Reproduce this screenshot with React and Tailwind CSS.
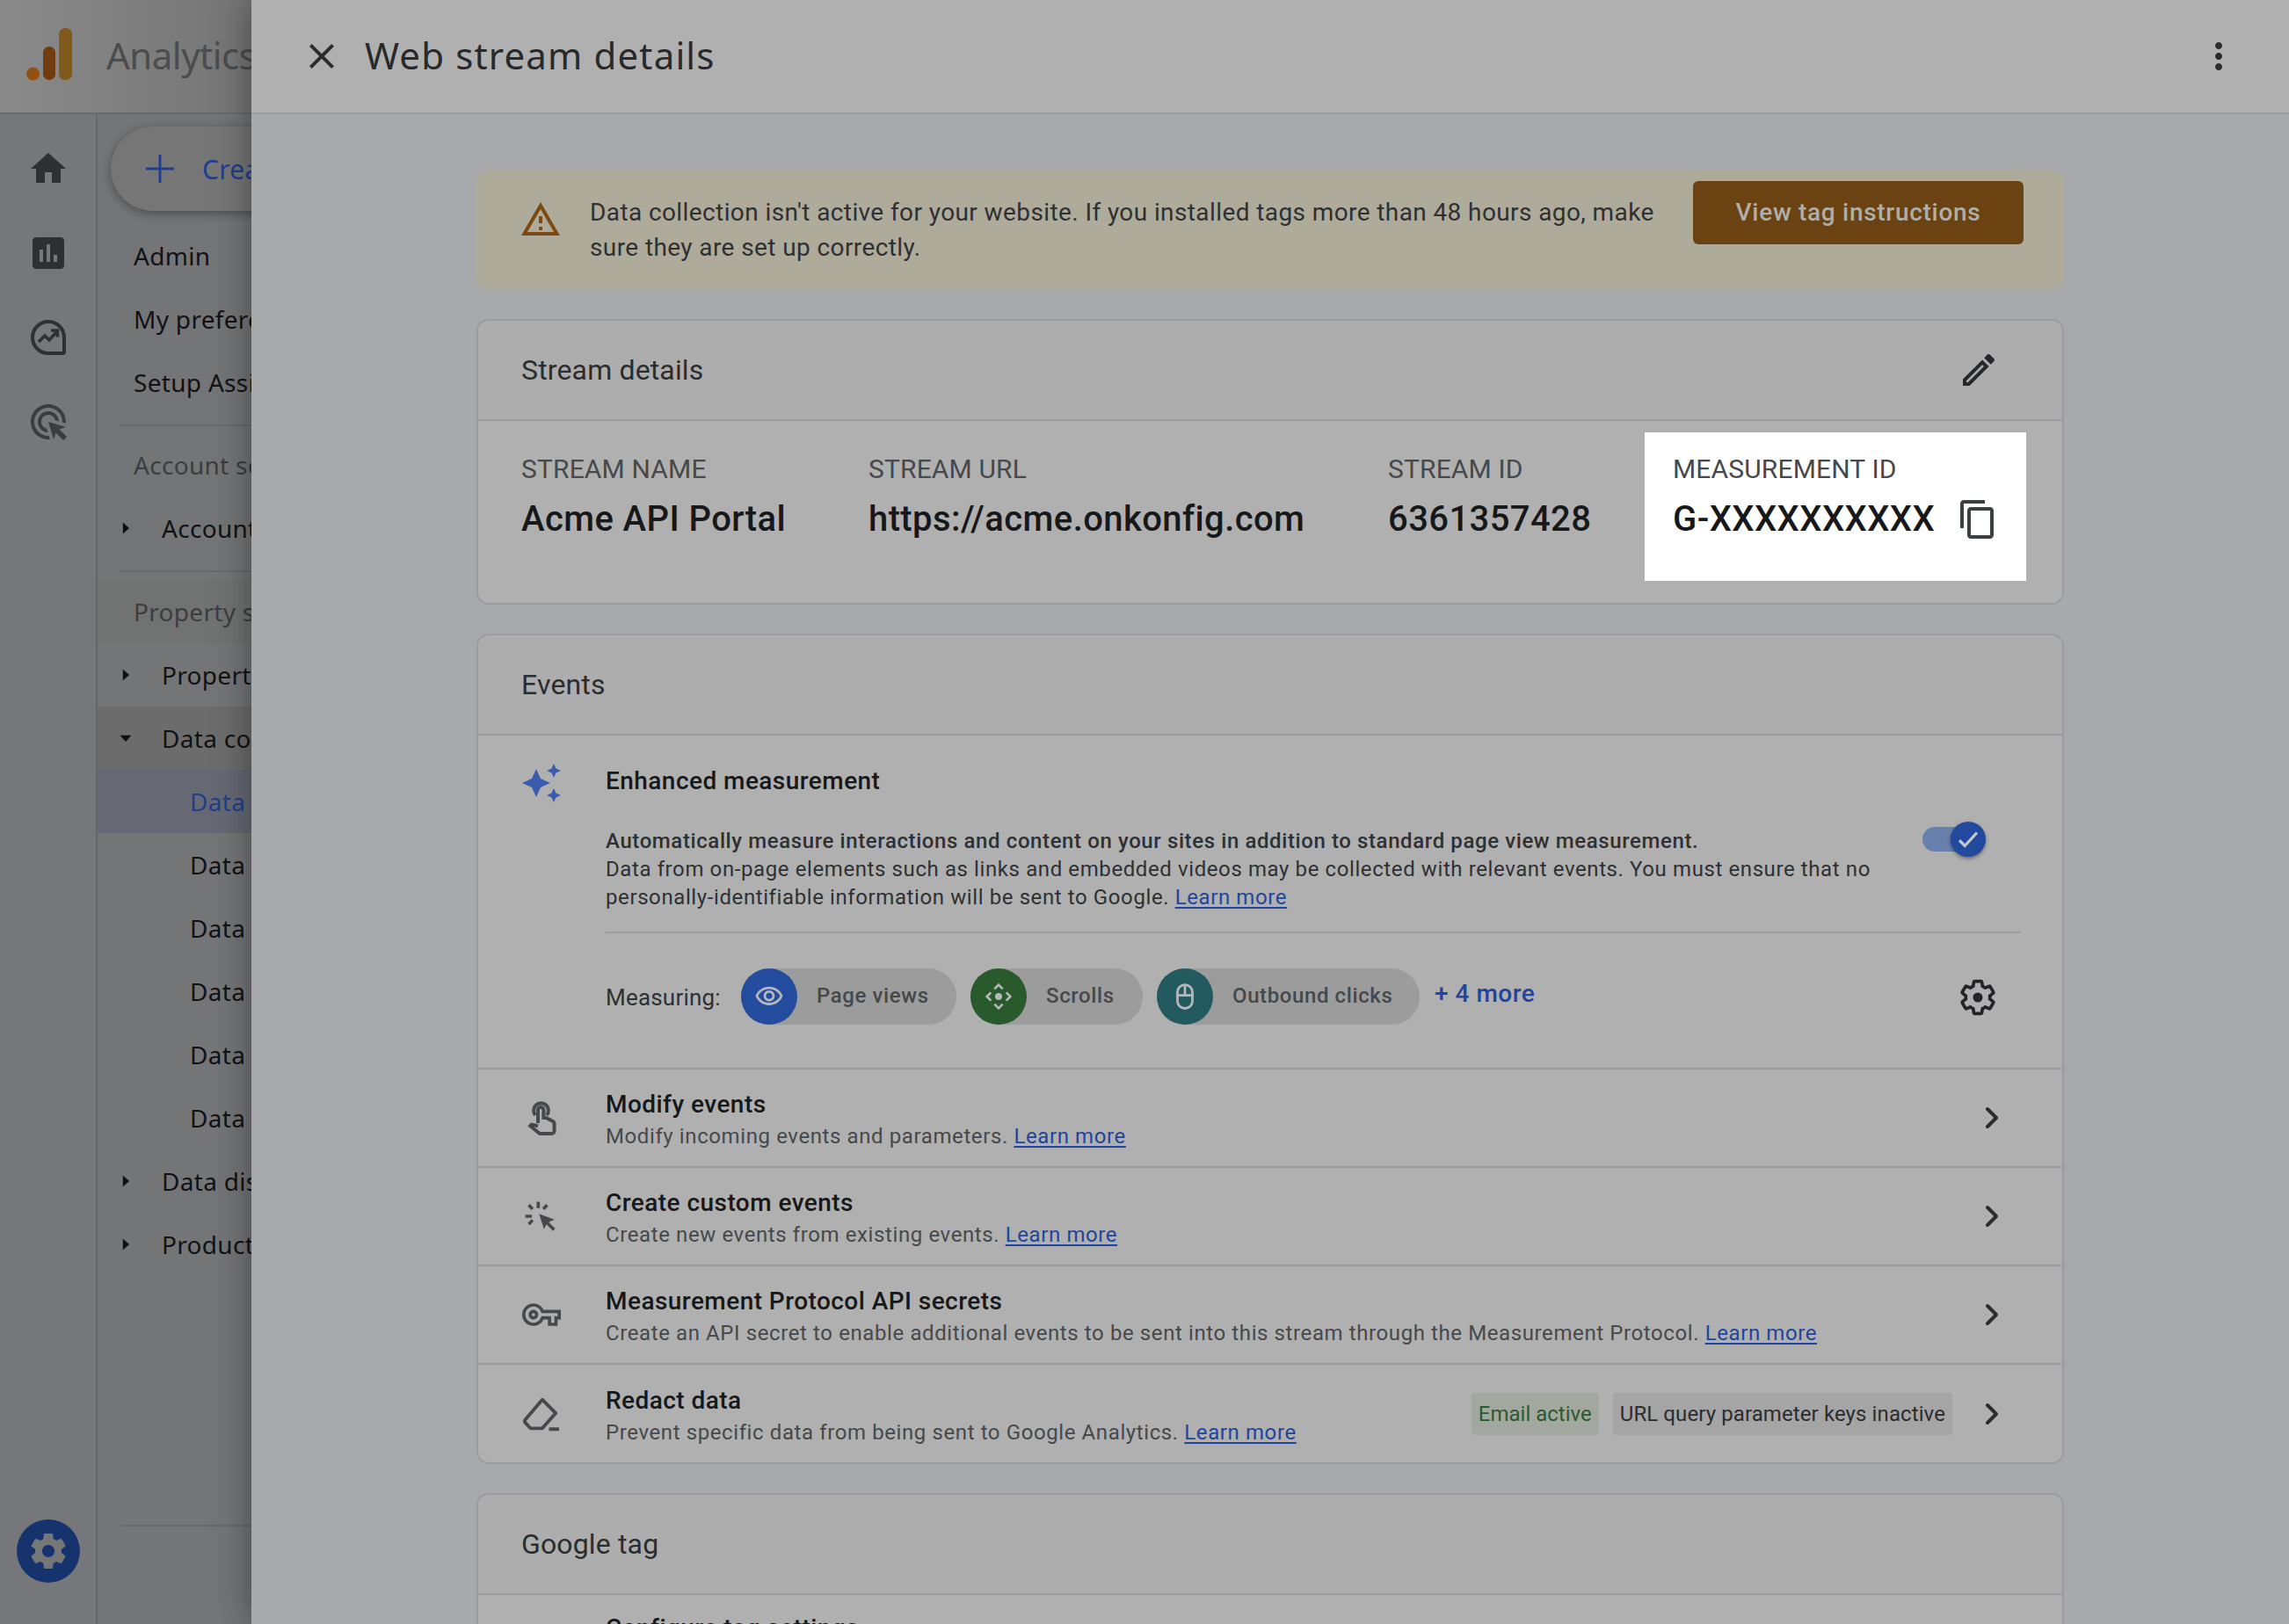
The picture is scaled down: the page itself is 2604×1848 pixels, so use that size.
import { ChevronRight } from 'lucide-react'

const ROBOTO = "font-['Roboto',sans-serif]"
const GSANS = "font-['Noto_Sans',sans-serif]"

const Icon = ({ d, className = '' }) => (
  <svg viewBox="0 0 24 24" className={className} fill="currentColor"><path d={d} /></svg>
)

const GEAR_OUTER = 'M19.43 12.98c.04-.32.07-.64.07-.98s-.03-.66-.07-.98l2.11-1.65c.19-.15.24-.42.12-.64l-2-3.46c-.12-.22-.39-.3-.61-.22l-2.49 1c-.52-.4-1.08-.73-1.69-.98l-.38-2.65C14.46 2.18 14.25 2 14 2h-4c-.25 0-.46.18-.49.42l-.38 2.65c-.61.25-1.17.59-1.69.98l-2.49-1c-.23-.09-.49 0-.61.22l-2 3.46c-.13.22-.07.49.12.64l2.11 1.65c-.04.32-.07.65-.07.98s.03.66.07.98l-2.11 1.65c-.19.15-.24.42-.12.64l2 3.46c.12.22.39.3.61.22l2.49-1c.52.4 1.08.73 1.69.98l.38 2.65c.03.24.24.42.49.42h4c.25 0 .46-.18.49-.42l.38-2.65c.61-.25 1.17-.59 1.69-.98l2.49 1c.23.09.49 0 .61-.22l2-3.46c.12-.22.07-.49-.12-.64l-2.11-1.65z'

function Caret({ open }) {
  return (
    <svg viewBox="0 0 10 10" className="w-[16px] h-[16px] text-[#0f0f10]" fill="currentColor">
      {open ? <path d="M1 3h8L5 7.5z" /> : <path d="M3 1v8l4.5-4z" />}
    </svg>
  )
}

function NavRow({ label, caret, sub, className = '' }) {
  return (
    <div className={`h-[72px] flex items-center whitespace-nowrap overflow-hidden ${className}`}>
      {caret ? (
        <>
          <div className="w-[73px] pl-[24px] shrink-0"><Caret open={caret === 'open'} /></div>
          <span>{label}</span>
        </>
      ) : (
        <span className={sub ? 'pl-[105px]' : 'pl-[41px]'}>{label}</span>
      )}
    </div>
  )
}

function Sidebar() {
  return (
    <div className="w-[286px] shrink-0 h-full flex flex-col bg-[#747577] overflow-hidden">
      <div className="h-[130px] shrink-0 flex items-center bg-gradient-to-r from-[#8a8a8a] to-[#757575] border-b-2 border-[#68696b]">
        <svg viewBox="0 0 56 62" className="w-[56px] h-[62px] ml-[28px] shrink-0 mt-[-2px]">
          <circle cx="9.5" cy="52" r="7.5" fill="#94500f" />
          <rect x="21" y="21" width="14" height="38" rx="6.5" fill="#713d10" />
          <rect x="39" y="0" width="15" height="59" rx="6.5" fill="#7f5a1a" />
        </svg>
        <span className={`${GSANS} text-[#4b4c4e] text-[42px] ml-[37px] mt-[-3px] tracking-[-0.5px]`}>Analytics</span>
      </div>
      <div className="flex-1 flex min-h-0">
        <div className="w-[111px] shrink-0 border-r-2 border-[#65666a] bg-[#76777a] flex flex-col items-center pt-[38px] pb-[47px] text-[#2e3034]">
          <Icon className="w-[48px] h-[48px]" d="M10 20v-6h4v6h5v-8h3L12 3 2 12h3v8z" />
          <Icon className="w-[48px] h-[48px] mt-[48px]" d="M19 3H5c-1.1 0-2 .9-2 2v14c0 1.1.9 2 2 2h14c1.1 0 2-.9 2-2V5c0-1.1-.9-2-2-2zM9 17H7v-7h2v7zm4 0h-2V7h2v10zm4 0h-2v-4h2v4z" />
          <svg viewBox="0 0 24 24" className="w-[48px] h-[48px] mt-[48px]" fill="none" stroke="currentColor" strokeWidth="2">
            <path d="M21 20.5V12a9 9 0 1 0-9 9h8.5z" />
            <path d="M6.5 14.5l3.5-3.5 2.5 2.5 4.5-5M13.5 8h3.7v3.7" strokeWidth="1.8" />
          </svg>
          <Icon className="w-[48px] h-[48px] mt-[48px] text-[#3a3c40]" d="M11.71 17.99C8.53 17.84 6 15.22 6 12c0-3.31 2.69-6 6-6 3.22 0 5.84 2.53 5.99 5.71l-2.1-.63C15.48 9.31 13.89 8 12 8c-2.21 0-4 1.79-4 4 0 1.89 1.31 3.48 3.08 3.89l.63 2.1zM22 12c0 .3-.01.6-.04.9l-1.97-.59c.01-.1.01-.21.01-.31 0-4.42-3.58-8-8-8s-8 3.58-8 8 3.58 8 8 8c.1 0 .21 0 .31-.01l.59 1.97c-.3.03-.6.04-.9.04-5.52 0-10-4.48-10-10S6.48 2 12 2s10 4.48 10 10zm-3.77 4.26L22 15l-10-3 3 10 1.26-3.77 4.27 4.27 1.98-1.98-4.28-4.26z" />
          <div className="mt-auto w-[72px] h-[72px] rounded-full bg-[#17336d] flex items-center justify-center text-[#757678]">
            <Icon className="w-[48px] h-[48px]" d={GEAR_OUTER + 'M12 15.5c-1.93 0-3.5-1.57-3.5-3.5s1.57-3.5 3.5-3.5 3.5 1.57 3.5 3.5-1.57 3.5-3.5 3.5z'} />
          </div>
        </div>
        <div className={`flex-1 min-w-0 flex flex-col ${GSANS} text-[28px] tracking-[0.3px] text-[#121214]`}>
          <div className="pl-[15px] pt-[14px]">
            <div className="w-[300px] h-[96px] rounded-full bg-[#767676] shadow-[0_3px_12px_rgba(0,0,0,0.35)] flex items-center pl-[40px] text-[#1e3f8f]">
              <svg viewBox="0 0 32 32" className="w-[32px] h-[32px]" fill="none" stroke="currentColor" strokeWidth="3"><path d="M16 0v32M0 16h32" /></svg>
              <span className="ml-[32px] text-[30px]">Create</span>
            </div>
          </div>
          <NavRow label="Admin" className="mt-[15px]" />
          <NavRow label="My preferences" />
          <NavRow label="Setup Assistant" />
          <div className="h-[2px] bg-[#68696b] ml-[26px] mt-[12px]" />
          <NavRow label="Account settings" className="mt-[8px] text-[#3c3d40]" />
          <NavRow label="Account" caret="closed" />
          <div className="h-[2px] bg-[#68696b] ml-[26px] mt-[12px]" />
          <NavRow label="Property settings" className="mt-[9px] bg-[#717272] text-[#3c3d40]" />
          <NavRow label="Property" caret="closed" />
          <NavRow label="Data collection" caret="open" className="bg-[#6c6c6c]" />
          <NavRow label="Data streams" sub className="bg-[#666973] text-[#1f3f8c]" />
          <NavRow label="Data collection" sub />
          <NavRow label="Data import" sub />
          <NavRow label="Data retention" sub />
          <NavRow label="Data filters" sub />
          <NavRow label="Data deletion" sub />
          <NavRow label="Data display" caret="closed" />
          <NavRow label="Product links" caret="closed" />
          <div className="h-[2px] bg-[#68696b] ml-[27px] mt-[283px]" />
        </div>
      </div>
    </div>
  )
}

function Learn({ children = 'Learn more' }) {
  return <span className="text-[#21459c] underline underline-offset-[3px] decoration-2">{children}</span>
}

function Card({ title, children, className = '' }) {
  return (
    <div className={`border-2 border-[#9b9ca1] rounded-[14px] bg-[#b0b0b0] overflow-hidden ${className}`}>
      <div className={`h-[114px] flex items-center justify-between pl-[49px] pr-[71px] bg-[#adadad] border-b-2 border-[#9b9ca1] ${ROBOTO} text-[32px] tracking-[0.15px] text-[#2b2c2e]`}>
        <span>{title}</span>
        {title === 'Stream details' && (
          <Icon className="w-[48px] h-[48px] text-[#26272a]" d="M14.06 9.02l.92.92L5.92 19H5v-.92l9.06-9.06M17.66 3c-.25 0-.51.1-.7.29l-1.83 1.83 3.75 3.75 1.83-1.83c.39-.39.39-1.02 0-1.41l-2.34-2.34c-.2-.2-.45-.29-.71-.29zm-3.6 3.19L3 17.25V21h3.75L17.81 9.94l-3.75-3.75z" />
        )}
      </div>
      {children}
    </div>
  )
}

function Detail({ label, value, className = '', children }) {
  return (
    <div className={className}>
      <div className="text-[30px] leading-[32px] tracking-[0.15px] text-[#46484b] whitespace-nowrap">{label}</div>
      <div className="flex items-center mt-[17px] h-[48px] text-[40px] font-medium tracking-[0.4px] text-[#17181a] whitespace-nowrap">
        {value}
        {children}
      </div>
    </div>
  )
}

function Chip({ color, label, width, children }) {
  return (
    <div className={`h-[64px] rounded-full bg-[#9c9c9c] flex items-center ${width}`}>
      <div className={`w-[64px] h-[64px] rounded-full flex items-center justify-center text-[#b5b7bb] ${color}`}>{children}</div>
      <span className="ml-[22px] mt-[-2px] text-[24px] font-medium tracking-[0.6px] text-[#46484b]">{label}</span>
    </div>
  )
}

function Row({ icon, title, children, right, last }) {
  return (
    <div className={`${last ? 'h-[113px]' : 'h-[112px]'} border-t-2 border-[#9b9ca1] flex items-center pr-[60px]`}>
      <div className="w-[145px] pl-[50px] shrink-0 text-[#46484b]">{icon}</div>
      <div className="flex-1 min-w-0 pt-[6px]">
        <div className="text-[28px] leading-[32px] font-medium tracking-[0.45px] text-[#17181a]">{title}</div>
        <div className="text-[24px] leading-[32px] mt-[4px] tracking-[0.6px] text-[#46484b]">{children}</div>
      </div>
      {right}
      <ChevronRight className="w-[40px] h-[40px] text-[#2b2c2e] ml-[25px] shrink-0" strokeWidth={2.4} />
    </div>
  )
}

function Panel() {
  return (
    <div className="flex-1 min-w-0 h-full flex flex-col bg-[#a8a9ab] shadow-[0_0_40px_rgba(0,0,0,0.4)] z-10">
      <div className="h-[130px] shrink-0 flex items-center bg-[#b0b0b0] border-b-2 border-[#9b9ca1] pl-[56px] pr-[57px]">
        <Icon className="w-[48px] h-[48px] text-[#2b2c2e]" d="M19 6.41 17.59 5 12 10.59 6.41 5 5 6.41 10.59 12 5 17.59 6.41 19 12 13.41 17.59 19 19 17.59 13.41 12z" />
        <span className={`${GSANS} ml-[25px] mt-[-3px] text-[42px] tracking-[1.15px] text-[#29292b]`}>Web stream details</span>
        <Icon className="w-[48px] h-[48px] ml-auto text-[#2b2c2e] mr-[-1px]" d="M12 8c1.1 0 2-.9 2-2s-.9-2-2-2-2 .9-2 2 .9 2 2 2zm0 2c-1.1 0-2 .9-2 2s.9 2 2 2 2-.9 2-2-.9-2-2-2zm0 6c-1.1 0-2 .9-2 2s.9 2 2 2 2-.9 2-2-.9-2-2-2z" />
      </div>
      <div className={`w-[1806px] mx-auto pt-[64px] flex flex-col ${ROBOTO}`}>
        <div className="h-[135px] rounded-[14px] bg-[#aeab9a] flex pl-[49px] pr-[46px] pt-[12px]">
          <Icon className="w-[48px] h-[48px] mt-[20px] text-[#7a4a12] shrink-0" d="M12 5.99 19.53 19H4.47L12 5.99M12 2 1 21h22L12 2zm1 14h-2v2h2v-2zm0-6h-2v4h2v-4z" />
          <p className="ml-[32px] w-[1240px] pt-[16px] text-[28px] leading-[40px] tracking-[0.4px] text-[#2f3033]">
            Data collection isn't active for your website. If you installed tags more than 48 hours ago, make sure they are set up correctly.
          </p>
          <div className="ml-auto w-[376px] h-[72px] rounded-[6px] bg-[#6b4212] flex items-center justify-center text-[28px] font-medium tracking-[0.7px] text-[#b0aea6]">
            View tag instructions
          </div>
        </div>

        <Card title="Stream details" className="mt-[34px]">
          <div className="flex pl-[49px] pt-[13px] pb-[25px]">
            <Detail label="STREAM NAME" value="Acme API Portal" className="w-[395px] pt-[26px]" />
            <Detail label="STREAM URL" value="https://acme.onkonfig.com" className="w-[591px] pt-[26px]" />
            <Detail label="STREAM ID" value="6361357428" className="w-[292px] pt-[26px]" />
            <Detail label="MEASUREMENT ID" value="G-XXXXXXXXXX" className="w-[434px] h-[169px] bg-white pt-[26px] pl-[32px]">
              <Icon className="w-[48px] h-[48px] ml-[25px] text-[#3c4043]" d="M16 1H4c-1.1 0-2 .9-2 2v14h2V3h12V1zm3 4H8c-1.1 0-2 .9-2 2v14c0 1.1.9 2 2 2h11c1.1 0 2-.9 2-2V7c0-1.1-.9-2-2-2zm0 16H8V7h11v14z" />
            </Detail>
          </div>
        </Card>

        <Card title="Events" className="mt-[33px]">
          <div className="h-[378px] flex">
            <div className="w-[145px] pl-[48px] pt-[30px] shrink-0">
              <Icon className="w-[48px] h-[48px] text-[#3a5cae]" d="M19 9l1.25-2.75L23 5l-2.75-1.25L19 1l-1.25 2.75L15 5l2.75 1.25L19 9zm-7.5.5L9 4 6.5 9.5 1 12l5.5 2.5L9 20l2.5-5.5L17 12l-5.5-2.5zM19 15l-1.25 2.75L15 19l2.75 1.25L19 23l1.25-2.75L23 19l-2.75-1.25L19 15z" />
            </div>
            <div className="flex-1 min-w-0 pr-[47px]">
              <div className="pt-[36px] text-[28px] leading-[32px] font-medium tracking-[0.45px] text-[#17181a]">Enhanced measurement</div>
              <div className="flex justify-between pb-[23px] border-b-2 border-[#9c9c9c]">
                <div className="w-[1440px] mt-[36px] text-[24px] leading-[32px] tracking-[0.6px] text-[#2f3033]">
                  <div className="font-medium">Automatically measure interactions and content on your sites in addition to standard page view measurement.</div>
                  <div>Data from on-page elements such as links and embedded videos may be collected with relevant events. You must ensure that no personally-identifiable information will be sent to Google. <Learn /></div>
                </div>
                <div className="relative w-[72px] h-[40px] mr-[40px] mt-[30px]">
                  <div className="mt-[6px] h-[28px] rounded-full bg-[#6880ae]" />
                  <div className="absolute right-0 top-0 w-[40px] h-[40px] rounded-full bg-[#23499f] shadow-[0_2px_4px_rgba(0,0,0,0.4)] flex items-center justify-center">
                    <svg viewBox="0 0 24 24" className="w-[30px] h-[30px]" fill="none" stroke="#c4c7cc" strokeWidth="2.6"><path d="M4 13l5 5L20 6" /></svg>
                  </div>
                </div>
              </div>
              <div className="flex items-center pt-[40px]">
                <span className="w-[154px] mt-[3px] text-[26px] tracking-[0.2px] text-[#2f3033]">Measuring:</span>
                <div className="flex items-center gap-[16px]">
                  <Chip color="bg-[#234c9e]" label="Page views" width="w-[245px]">
                    <Icon className="w-[34px] h-[34px]" d="M12 6c3.79 0 7.17 2.13 8.82 5.5C19.17 14.87 15.79 17 12 17s-7.17-2.13-8.82-5.5C4.83 8.13 8.21 6 12 6m0-2C7 4 2.73 7.11 1 11.5 2.73 15.89 7 19 12 19s9.27-3.11 11-7.5C21.27 7.11 17 4 12 4zm0 5c1.38 0 2.5 1.12 2.5 2.5S13.38 14 12 14s-2.5-1.12-2.5-2.5S10.62 9 12 9m0-2c-2.48 0-4.5 2.02-4.5 4.5S9.52 16 12 16s4.5-2.02 4.5-4.5S14.48 7 12 7z" />
                  </Chip>
                  <Chip color="bg-[#285a2b]" label="Scrolls" width="w-[196px]">
                    <svg viewBox="0 0 24 24" className="w-[32px] h-[32px]" fill="none" stroke="currentColor" strokeWidth="2">
                      <path d="M8.5 5.5 12 2l3.5 3.5M8.5 18.5 12 22l3.5-3.5M5.5 8.5 2 12l3.5 3.5M18.5 8.5 22 12l-3.5 3.5" />
                      <circle cx="12" cy="12" r="3" fill="currentColor" stroke="none" />
                    </svg>
                  </Chip>
                  <Chip color="bg-[#235a60]" label="Outbound clicks" width="w-[299px]">
                    <svg viewBox="0 0 24 24" className="w-[34px] h-[34px]" fill="none" stroke="currentColor" strokeWidth="2">
                      <rect x="6" y="2.5" width="12" height="19" rx="6" />
                      <path d="M6 11h12M12 2.5V11" />
                    </svg>
                  </Chip>
                </div>
                <span className="ml-[17px] mt-[-7px] text-[28px] font-medium tracking-[0.5px] text-[#21459c]">+ 4 more</span>
                <svg viewBox="0 0 24 24" className="w-[44px] h-[44px] ml-auto mr-[27px] mt-[2px] text-[#232427]" fill="none" stroke="currentColor" strokeWidth="2">
                  <path d={GEAR_OUTER} />
                  <circle cx="12" cy="12" r="3" fill="currentColor" stroke="none" />
                </svg>
              </div>
            </div>
          </div>
          <Row
            title="Modify events"
            icon={
              <svg viewBox="0 0 24 24" className="w-[48px] h-[48px] ml-[-2px]" fill="none" stroke="currentColor" strokeWidth="2">
                <path d="M8.5 10.5a4.2 4.2 0 1 1 6.5 0" />
                <path d="M10 15V7.5a1.6 1.6 0 0 1 3.2 0V12h1.5l3.8 2a1.5 1.5 0 0 1 .8 1.5v4a1.5 1.5 0 0 1-1.5 1.5H11L5.6 16.6l.8-.8 3.6.8" />
              </svg>
            }
          >
            Modify incoming events and parameters. <Learn />
          </Row>
          <Row
            title="Create custom events"
            icon={
              <svg viewBox="0 0 24 24" className="w-[44px] h-[44px]" fill="currentColor">
                <path d="M10.5 10.5 20 14l-3.5 1.7 4 4-1.4 1.4-4-4L13.6 20z" />
                <path d="M9 3h2v4H9zM2 11h4v2H2zM3.4 5.8l1.4-1.4 2.4 2.4-1.4 1.4zM14.8 4.4l1.4 1.4-2.4 2.4-1.4-1.4zM4.8 17.6l-1.4-1.4 2.4-2.4 1.4 1.4z" />
              </svg>
            }
          >
            Create new events from existing events. <Learn />
          </Row>
          <Row
            title="Measurement Protocol API secrets"
            icon={<Icon className="w-[44px] h-[44px]" d="M22 19h-6v-4h-2.68c-1.14 2.42-3.6 4-6.32 4-3.86 0-7-3.14-7-7s3.14-7 7-7c2.72 0 5.17 1.58 6.32 4H24v6h-2v4zm-4-2h2v-4h2v-2H11.94l-.23-.67C11.01 8.34 9.11 7 7 7c-2.76 0-5 2.24-5 5s2.24 5 5 5c2.11 0 4.01-1.34 4.71-3.33l.23-.67H18v4zM7 15c-1.65 0-3-1.35-3-3s1.35-3 3-3 3 1.35 3 3-1.35 3-3 3zm0-4c-.55 0-1 .45-1 1s.45 1 1 1 1-.45 1-1-.45-1-1-1z" />}
          >
            Create an API secret to enable additional events to be sent into this stream through the Measurement Protocol. <Learn />
          </Row>
          <Row
            last
            title="Redact data"
            icon={
              <svg viewBox="0 0 24 24" className="w-[46px] h-[46px] ml-[-2px]" fill="none" stroke="currentColor" strokeWidth="2">
                <path d="M13 3.5l8 8-8 9H6l-3-3.2a1.5 1.5 0 0 1 0-2z" strokeLinejoin="round" />
                <path d="M17 21h6" />
              </svg>
            }
            right={
              <div className="flex items-center gap-[16px] shrink-0">
                <div className="h-[48px] px-[8px] rounded-[4px] bg-[#a2a89f] flex items-center text-[24px] text-[#2c5a30]">Email active</div>
                <div className="h-[48px] px-[8px] rounded-[4px] bg-[#a5a5a5] flex items-center text-[24px] tracking-[0.1px] text-[#2b2c2e]">URL query parameter keys inactive</div>
              </div>
            }
          >
            Prevent specific data from being sent to Google Analytics. <Learn />
          </Row>
        </Card>

        <Card title="Google tag" className="mt-[33px]">
          <div className="pl-[145px] pt-[22px] text-[28px] leading-[32px] font-medium tracking-[0.45px] text-[#17181a]">Configure tag settings</div>
        </Card>
      </div>
    </div>
  )
}

export default function App() {
  return (
    <div className="w-[2604px] h-[1848px] flex overflow-hidden">
      <Sidebar />
      <Panel />
    </div>
  )
}
